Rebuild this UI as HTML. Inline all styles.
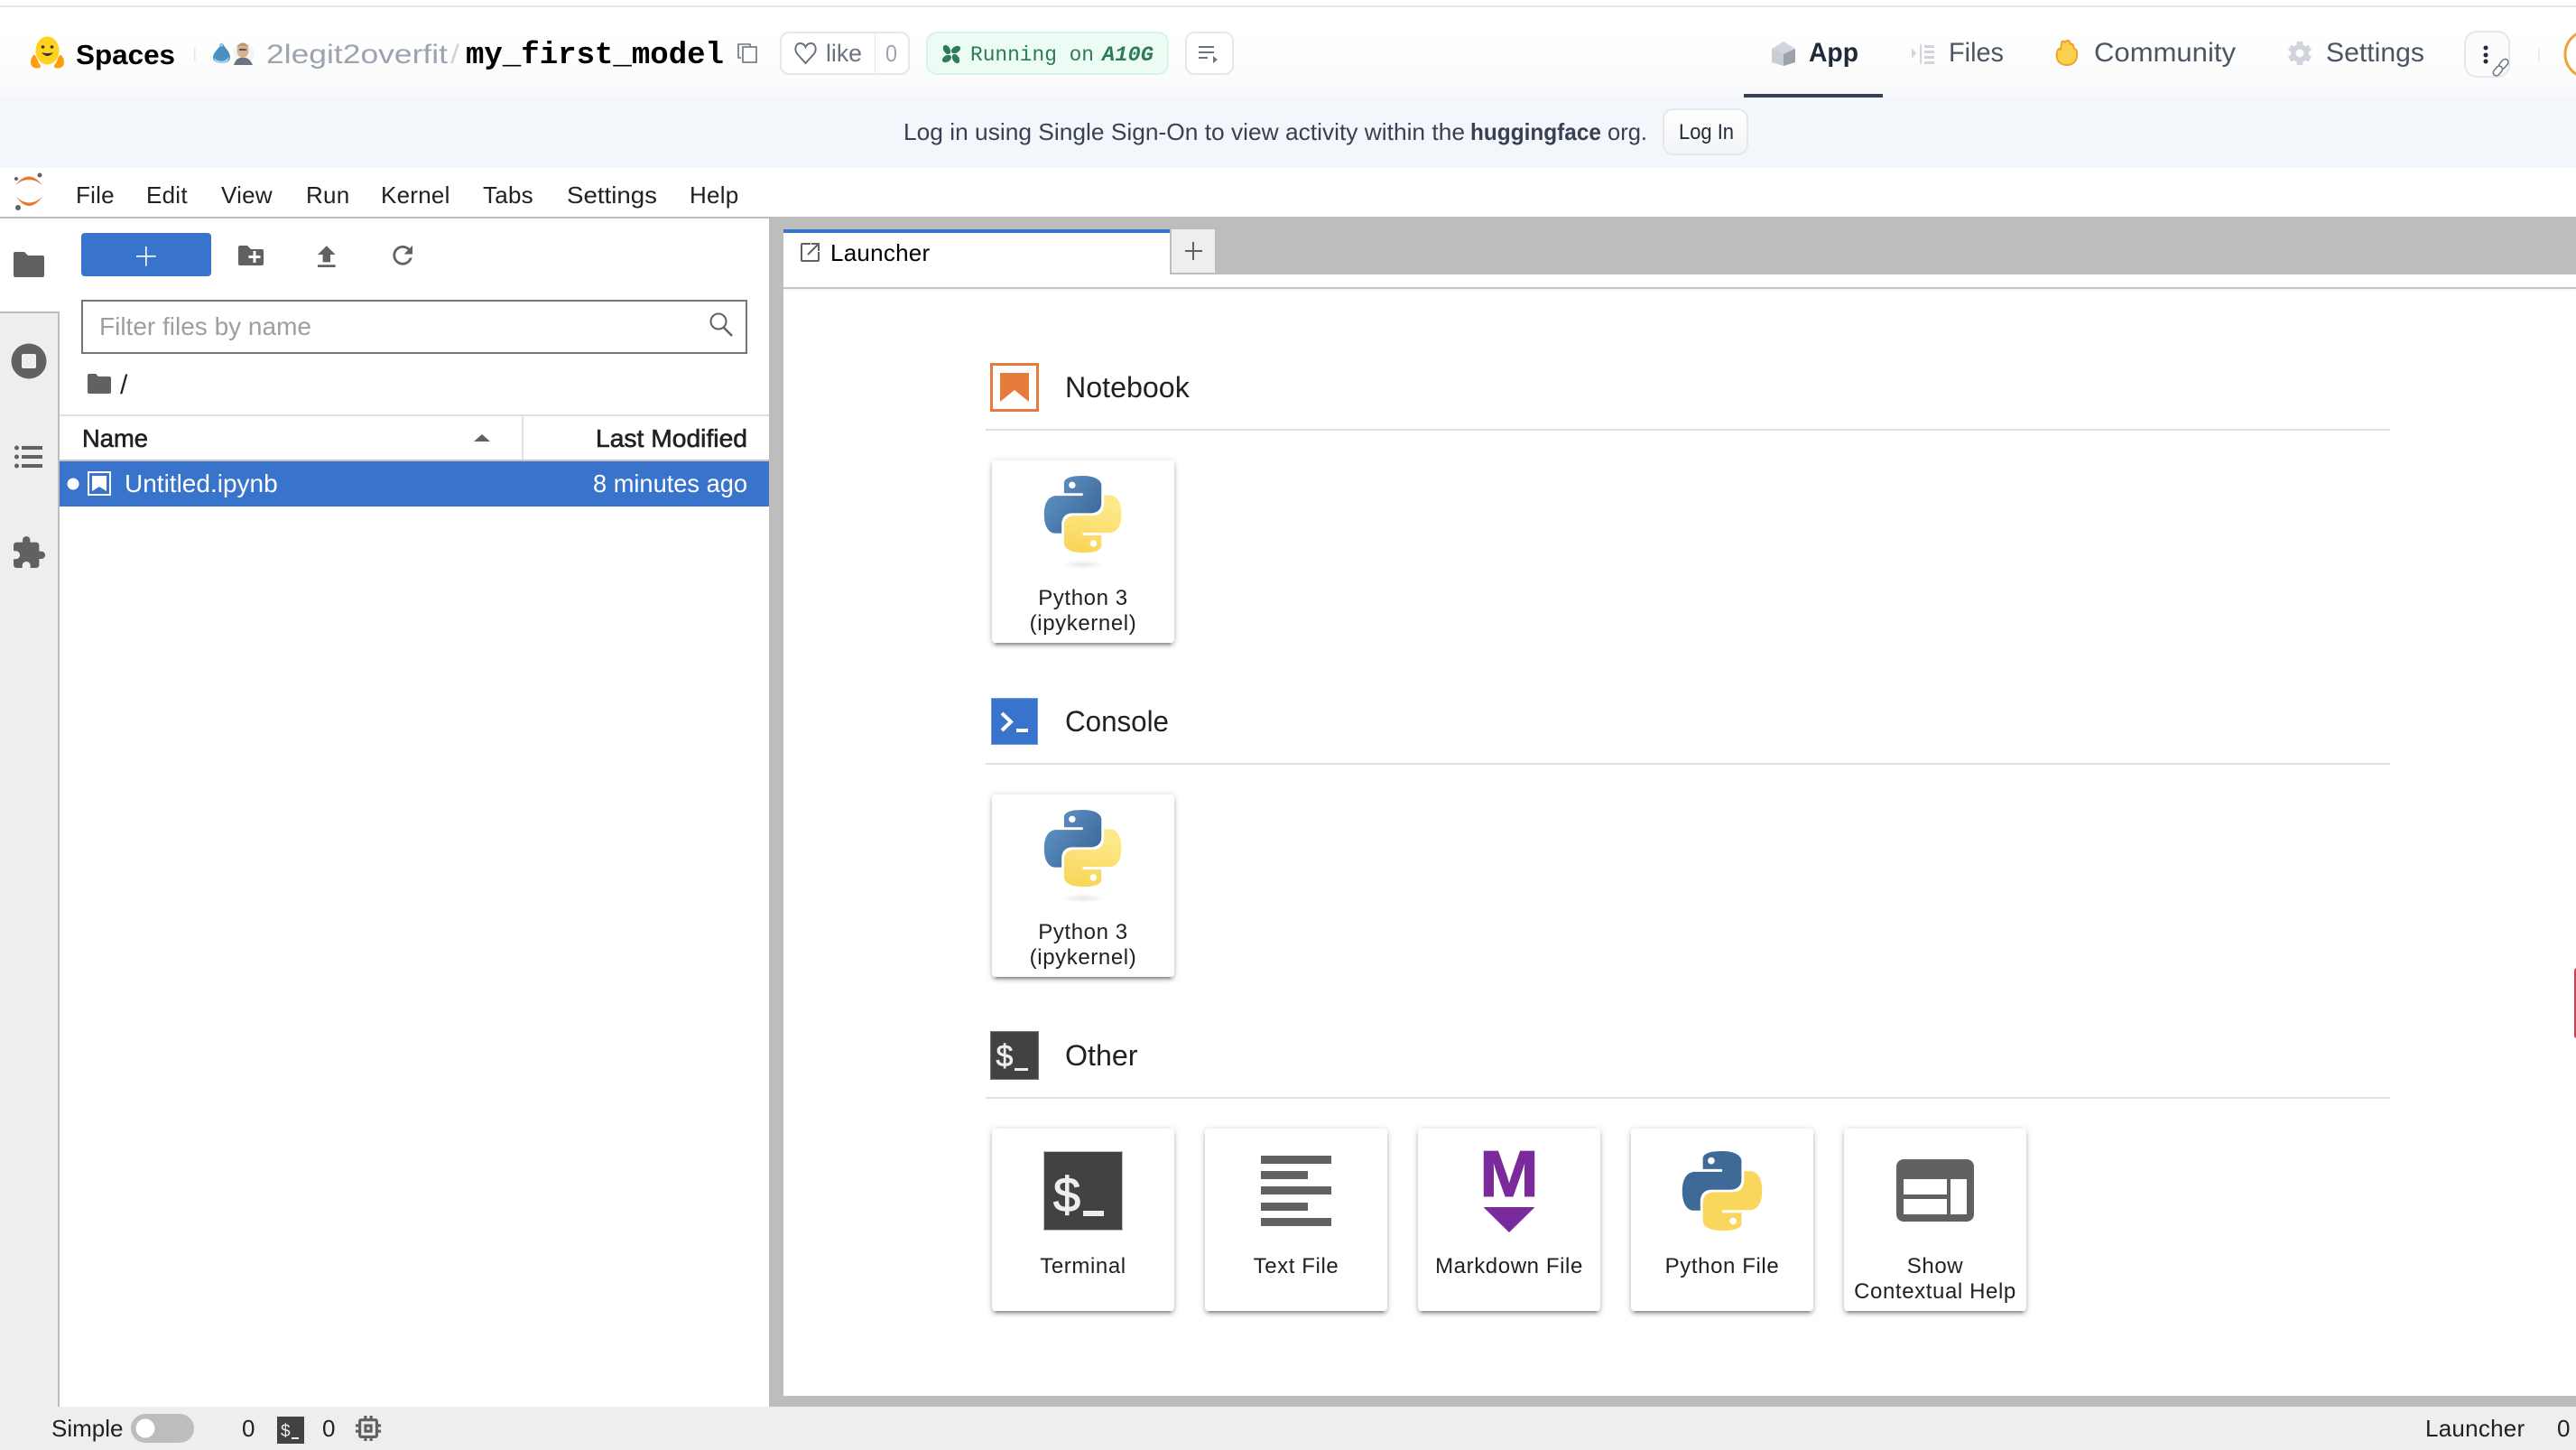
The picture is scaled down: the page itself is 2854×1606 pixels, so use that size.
<!DOCTYPE html>
<html lang="en"><head><meta charset="utf-8"><title>my_first_model - JupyterLab</title>
<style>
html,body{margin:0;padding:0;width:2854px;height:1606px;overflow:hidden;background:#fff}
.b{position:absolute}
.card{position:absolute;width:202px;height:202px;background:#fff;border-radius:4px;box-shadow:0 6px 2px -4px rgba(0,0,0,.24),0 4px 4px rgba(0,0,0,.16),0 1px 8px rgba(0,0,0,.18)}
svg#o{position:absolute;left:0;top:0}
text{font-family:"Liberation Sans",Arial,sans-serif;fill:#212121;white-space:pre}
.m{font-family:"Liberation Mono",monospace}
.n{font-size:26px}
.mn{font-size:26px;letter-spacing:.25px}
.f{font-size:28px}
.h{font-size:32.2px}
.l{font-size:24px;letter-spacing:.6px;text-anchor:middle}
.hf{font-size:30px;fill:#4b5563}
.bn{font-size:26px;fill:#374151}
</style></head><body>
<!-- HF header -->
<div class="b" style="left:0;top:6px;width:2854px;height:2px;background:#e5e5e5"></div>
<div class="b" style="left:0;top:8px;width:2854px;height:98px;background:linear-gradient(#fff 30%,#f9fafb)"></div>
<div class="b" style="left:0;top:106px;width:2854px;height:80px;background:#f3f6fa"></div>
<div class="b" style="left:1932px;top:104px;width:154px;height:4px;background:#374151"></div>
<div class="b" style="left:864px;top:35px;width:140px;height:44px;border:2px solid #e5e7eb;border-radius:10px;background:#fff"></div>
<div class="b" style="left:969px;top:36px;width:1px;height:46px;background:#e5e7eb"></div>
<div class="b" style="left:1026px;top:35px;width:265px;height:44px;border:2px solid #d6f5e6;border-radius:12px;background:#ecfbf3"></div>
<div class="b" style="left:1313px;top:35px;width:50px;height:44px;border:2px solid #e5e7eb;border-radius:10px;background:#fff"></div>
<div class="b" style="left:1842px;top:120px;width:91px;height:48px;border:2px solid #e5e7eb;border-radius:12px;background:linear-gradient(#fff,#f3f4f6)"></div>
<div class="b" style="left:2730px;top:34px;width:47px;height:48px;border:2px solid #e5e7eb;border-radius:14px;background:#fcfcfd"></div>
<!-- Jupyter chrome -->
<div class="b" style="left:0;top:240px;width:2854px;height:2px;background:#bdbdbd"></div>
<div class="b" style="left:0;top:345px;width:66px;height:1213px;background:#eee;box-sizing:border-box;border-top:2px solid #bdbdbd;border-right:2px solid #bdbdbd"></div>
<div class="b" style="left:852px;top:241px;width:2002px;height:63px;background:#bdbdbd"></div>
<div class="b" style="left:852px;top:241px;width:16px;height:1317px;background:#bdbdbd"></div>
<div class="b" style="left:868px;top:254px;width:428px;height:64px;background:#fff"></div>
<div class="b" style="left:868px;top:254px;width:428px;height:4px;background:#3874cb"></div>
<div class="b" style="left:1296px;top:254px;width:50px;height:50px;box-sizing:border-box;background:#eee;border-left:2px solid #bdbdbd;border-bottom:2px solid #bdbdbd"></div>
<div class="b" style="left:868px;top:318px;width:1986px;height:2px;background:#c4c4c4;box-shadow:0 1px 3px rgba(0,0,0,.08)"></div>
<div class="b" style="left:868px;top:1546px;width:1986px;height:12px;background:#bdbdbd"></div>
<div class="b" style="left:0;top:1558px;width:2854px;height:48px;background:#eee"></div>
<div class="b" style="left:2852px;top:1072px;width:6px;height:78px;background:#c8434f;border-radius:6px"></div>
<!-- File browser -->
<div class="b" style="left:90px;top:258px;width:144px;height:48px;background:#3874cb;border-radius:4px"></div>
<div class="b" style="left:90px;top:332px;width:738px;height:60px;box-sizing:border-box;border:2px solid #757575;background:#fff"></div>
<div class="b" style="left:66px;top:459px;width:786px;height:2px;background:#e0e0e0"></div>
<div class="b" style="left:578px;top:460px;width:2px;height:50px;background:#e0e0e0"></div>
<div class="b" style="left:66px;top:509px;width:786px;height:2px;background:#c4c4c4"></div>
<div class="b" style="left:66px;top:511px;width:786px;height:50px;background:#3874cb"></div>
<!-- Launcher cards and separators -->
<div class="b" style="left:1092px;top:475px;width:1556px;height:2px;background:#e0e0e0"></div>
<div class="b" style="left:1092px;top:845px;width:1556px;height:2px;background:#e0e0e0"></div>
<div class="b" style="left:1092px;top:1215px;width:1556px;height:2px;background:#e0e0e0"></div>
<div class="card" style="left:1099px;top:510px"></div>
<div class="card" style="left:1099px;top:880px"></div>
<div class="card" style="left:1099px;top:1250px"></div>
<div class="card" style="left:1335px;top:1250px"></div>
<div class="card" style="left:1571px;top:1250px"></div>
<div class="card" style="left:1807px;top:1250px"></div>
<div class="card" style="left:2043px;top:1250px"></div>

<svg id="o" width="2854" height="1606" viewBox="0 0 2854 1606" xmlns="http://www.w3.org/2000/svg">
<defs>
<linearGradient id="gb" gradientUnits="userSpaceOnUse" x1="2" y1="3" x2="17" y2="15"><stop offset="0" stop-color="#5d91c2"/><stop offset="1" stop-color="#3a6696"/></linearGradient>
<linearGradient id="gy" gradientUnits="userSpaceOnUse" x1="14" y1="8" x2="11" y2="23"><stop offset="0" stop-color="#fde98a"/><stop offset="1" stop-color="#f9d65c"/></linearGradient>
<radialGradient id="gs"><stop offset="0" stop-color="#000" stop-opacity=".1"/><stop offset="1" stop-color="#000" stop-opacity="0"/></radialGradient>
<path id="pb" fill-rule="evenodd" d="M14.25.18l.9.2.73.26.59.3.45.32.34.34.25.34.16.33.1.3.04.26.02.2-.01.13V8.5l-.05.63-.13.55-.21.46-.26.38-.3.31-.33.25-.35.19-.35.14-.33.1-.3.07-.26.04-.21.02H8.77l-.69.05-.59.14-.5.22-.41.27-.33.32-.27.35-.2.36-.15.37-.1.35-.07.32-.04.27-.02.21v3.06H3.17l-.21-.03-.28-.07-.32-.12-.35-.18-.36-.26-.36-.36-.35-.46-.32-.59-.28-.73-.21-.88-.14-1.05-.05-1.23.06-1.22.16-1.04.24-.87.32-.71.36-.57.4-.44.42-.33.42-.24.4-.16.36-.1.32-.05.24-.01h.16l.06.01h8.16v-.83H6.18l-.01-2.75-.02-.37.05-.34.11-.31.17-.28.25-.26.31-.23.38-.2.44-.18.51-.15.58-.12.64-.1.71-.06.77-.04.84-.02 1.27.05zm-6.3 1.98l-.23.33-.08.41.08.41.23.34.33.22.41.09.41-.09.33-.22.23-.34.08-.41-.08-.41-.23-.33-.33-.22-.41-.09-.41.09z"/>
<path id="py" fill-rule="evenodd" d="M21.04 6.11l.28.06.32.12.35.18.36.27.36.35.35.47.32.59.28.73.21.88.14 1.04.05 1.23-.06 1.23-.16 1.04-.24.86-.32.71-.36.57-.4.45-.42.33-.42.24-.4.16-.36.09-.32.05-.24.02-.16-.01h-8.22v.82h5.84l.01 2.76.02.36-.05.34-.11.31-.17.29-.25.25-.31.24-.38.2-.44.17-.51.15-.58.13-.64.09-.71.07-.77.04-.84.01-1.27-.04-1.07-.14-.9-.2-.73-.25-.59-.3-.45-.33-.34-.34-.25-.34-.16-.33-.1-.3-.04-.25-.02-.2.01-.13v-5.34l.05-.64.13-.54.21-.46.26-.38.3-.32.33-.24.35-.2.35-.14.33-.1.3-.06.26-.04.21-.02.13-.01h5.84l.69-.05.59-.14.5-.21.41-.28.33-.32.27-.35.2-.36.15-.36.1-.35.07-.32.04-.28.02-.21V6.07h2.09l.14.01zm-6.47 14.25l-.23.33-.08.41.08.41.23.33.33.23.41.08.41-.08.33-.23.23-.33.08-.41-.08-.41-.23-.33-.33-.23-.41-.08-.41.08z"/>
</defs>

<!-- HF logo -->
<g>
<ellipse cx="52.5" cy="56" rx="13" ry="15.5" fill="#ffd21e"/>
<path d="M37 61c-3 4-4 8-2 12 3 3 7 3 9 2 2-1 1-3-1-5l-2-5c-1-3-3-5-4-4z" fill="#ff9d0b"/>
<path d="M68 61c3 4 4 8 2 12-3 3-7 3-9 2-2-1-1-3 1-5l2-5c1-3 3-5 4-4z" fill="#ff9d0b"/>
<circle cx="47.500" cy="52" r="1.800" fill="#32343d"/><circle cx="57.500" cy="52" r="1.800" fill="#32343d"/>
<path d="M47.500 59q5 5 10 0q-5 1-10 0z" fill="#32343d" stroke="#32343d" stroke-width="1"/>
</g>
<text x="84" y="71" font-size="31" font-weight="700" style="fill:#000" textLength="110" lengthAdjust="spacingAndGlyphs">Spaces</text>
<rect x="215" y="52" width="1.500" height="16" fill="#e5e7eb"/>
<!-- avatars -->
<path d="M246 47c-1 5-10 10-10 17 0 4 5 6 10 6s9-2 9-7c0-6-7-11-9-16z" fill="#4a90c0"/>
<path d="M237 64q9 8 17-1q-1 7-8 7-8 0-9-6z" fill="#a9d4ee"/>
<circle cx="245" cy="50" r="2" fill="#8ec6e6"/>
<circle cx="270" cy="59" r="12" fill="#f3f4f6"/>
<ellipse cx="269" cy="56" rx="6.500" ry="8" fill="#d8b08c"/>
<path d="M262 52q7-9 14 0q-7-3-14 0z" fill="#b89a66"/>
<path d="M259 72q3-9 10-8q7-1 11 8z" fill="#6b7280"/>
<rect x="265" y="54" width="8" height="2" fill="#555"/>
<text x="295" y="70" class="hf" style="fill:#9ca3af" textLength="201" lengthAdjust="spacingAndGlyphs">2legit2overfit</text>
<text x="499" y="70" class="hf" style="fill:#d1d5db" textLength="10" lengthAdjust="spacingAndGlyphs">/</text>
<text x="516" y="70" class="m" font-size="34" font-weight="700" style="fill:#000" textLength="286" lengthAdjust="spacingAndGlyphs">my_first_model</text>
<g fill="none" stroke="#6b7280" stroke-width="1.600"><rect x="823" y="52" width="15" height="17"/><path d="M821 64h-3V49h13v3"/></g>
<!-- like -->
<path d="M892.500 70l-9-10c-4-5-2-12 3-12 3 0 5 2 6 4 1-2 3-4 6-4 5 0 7 7 3 12z" fill="none" stroke="#6b7280" stroke-width="2"/>
<text x="915" y="68" class="hf" font-size="27" style="fill:#6b7280;font-size:27px" textLength="40" lengthAdjust="spacingAndGlyphs">like</text>
<text x="981" y="68" class="hf" style="fill:#9ca3af;font-size:26px" textLength="13" lengthAdjust="spacingAndGlyphs">0</text>
<!-- running -->
<g fill="#2f7a5a" transform="translate(1054 60)">
<ellipse cx="-5" cy="-5" rx="5.500" ry="3.600" transform="rotate(60 -5 -5)"/>
<ellipse cx="5" cy="-5" rx="5.500" ry="3.600" transform="rotate(-30 5 -5)"/>
<ellipse cx="5" cy="5" rx="5.500" ry="3.600" transform="rotate(60 5 5)"/>
<ellipse cx="-5" cy="5" rx="5.500" ry="3.600" transform="rotate(-30 -5 5)"/>
</g>
<text x="1075" y="67" class="m" font-size="23" style="fill:#2f7a5a" textLength="137" lengthAdjust="spacingAndGlyphs">Running on</text>
<text x="1221" y="67" class="m" font-size="23" font-weight="700" font-style="italic" style="fill:#2f7a5a" textLength="57" lengthAdjust="spacingAndGlyphs">A10G</text>
<!-- small list btn -->
<g fill="#6b7280"><rect x="1328" y="51" width="17" height="2"/><rect x="1328" y="57" width="17" height="2"/><rect x="1328" y="63" width="10" height="2"/><path d="M1344 62l5 4-5 4z"/></g>
<!-- right tabs -->
<path d="M1976 46l13 8v15l-13 4-13-4V54z" fill="#d1d5db"/><path d="M1976 60l13-6v15l-13 4z" fill="#9ca3af"/><path d="M1976 60l-13-6v15l13 4z" fill="#c9cdd4"/>
<text x="2004" y="68" class="hf" font-weight="700" style="fill:#1f2937" textLength="55" lengthAdjust="spacingAndGlyphs">App</text>
<g fill="#d1d5db"><path d="M2118 53l5 6-5 6z"/><rect x="2127" y="49" width="2" height="22"/><rect x="2132" y="50" width="11" height="3"/><rect x="2132" y="56" width="11" height="3"/><rect x="2132" y="62" width="11" height="3"/><rect x="2132" y="68" width="11" height="3"/></g>
<text x="2159" y="68" class="hf" textLength="61" lengthAdjust="spacingAndGlyphs">Files</text>
<path d="M2279 64c-1-4 0-8 2-10l2 1 1-7c0-3 3-3 4-1l1-1c1-2 4-1 4 1l1 2c1-1 3 0 3 2l1 3c2 0 3 2 3 4 1 8-3 14-11 14-6 0-10-3-11-8z" fill="#fbd24e" stroke="#f1a22c" stroke-width="2"/>
<text x="2320" y="68" class="hf" textLength="157" lengthAdjust="spacingAndGlyphs">Community</text>
<g fill="#d1d5db"><circle cx="2548" cy="59" r="10"/><rect x="2544.500" y="46" width="7" height="26" rx="1"/><rect x="2544.500" y="46" width="7" height="26" rx="1" transform="rotate(60 2548 59)"/><rect x="2544.500" y="46" width="7" height="26" rx="1" transform="rotate(120 2548 59)"/></g><circle cx="2548" cy="59" r="4.500" fill="#fdfdfe"/>
<text x="2577" y="68" class="hf" textLength="109" lengthAdjust="spacingAndGlyphs">Settings</text>
<g fill="#1f2937"><circle cx="2754" cy="53" r="2.500"/><circle cx="2754" cy="61" r="2.500"/><circle cx="2754" cy="68" r="2.500"/></g>
<g transform="rotate(40 2771 75)" fill="#fff" stroke="#6b7280" stroke-width="1.500"><rect x="2767" y="64" width="7" height="12" rx="3.500"/><rect x="2767" y="74" width="7" height="12" rx="3.500"/></g>
<rect x="2812" y="53" width="1.500" height="16" fill="#e5e7eb"/>
<circle cx="2868" cy="60" r="26" fill="#fff" stroke="#eca33a" stroke-width="3"/>
<!-- banner -->
<text x="1001" y="155" class="bn" textLength="622" lengthAdjust="spacingAndGlyphs">Log in using Single Sign-On to view activity within the</text>
<text x="1629" y="155" class="bn" font-weight="700" textLength="145" lengthAdjust="spacingAndGlyphs">huggingface</text>
<text x="1781" y="155" class="bn" textLength="44" lengthAdjust="spacingAndGlyphs">org.</text>
<text x="1860" y="154" style="font-size:24px;fill:#1f2937" textLength="61" lengthAdjust="spacingAndGlyphs">Log In</text>

<!-- Jupyter logo & menu -->
<path d="M17 205Q32 186 47 205Q32 193 17 205z M18 218Q32 238 47 218Q32 231 18 218z" fill="#e67a33"/>
<circle cx="18" cy="198" r="2" fill="#616161"/><circle cx="44" cy="194" r="2.500" fill="#616161"/><circle cx="20" cy="230" r="3" fill="#616161"/>
<text x="84" y="225" class="mn">File</text>
<text x="162" y="225" class="mn">Edit</text>
<text x="245" y="225" class="mn">View</text>
<text x="339" y="225" class="mn">Run</text>
<text x="422" y="225" class="mn">Kernel</text>
<text x="535" y="225" class="mn">Tabs</text>
<text x="628" y="225" class="n" textLength="100" lengthAdjust="spacingAndGlyphs">Settings</text>
<text x="764" y="225" class="mn">Help</text>

<!-- side bar icons -->
<path d="M17 279h10l4 4h16a2 2 0 0 1 2 2v20a2 2 0 0 1-2 2H17a2 2 0 0 1-2-2V281a2 2 0 0 1 2-2z" fill="#616161"/>
<circle cx="32" cy="400" r="19.500" fill="#616161"/><rect x="24" y="392" width="16" height="16" rx="2" fill="#eee"/>
<g fill="#616161"><circle cx="18.500" cy="496" r="2.500"/><circle cx="18.500" cy="506" r="2.500"/><circle cx="18.500" cy="516" r="2.500"/><rect x="24" y="494" width="23" height="4"/><rect x="24" y="504" width="23" height="4"/><rect x="24" y="514" width="23" height="4"/></g>
<path transform="translate(11.700 592.300) scale(1.667)" fill="#616161" d="M20.500 11H19V7c0-1.100-.9-2-2-2h-4V3.500C13 2.120 11.880 1 10.500 1S8 2.120 8 3.500V5H4c-1.100 0-1.990.9-1.990 2v3.800H3.500c1.490 0 2.700 1.210 2.700 2.700s-1.210 2.700-2.700 2.700H2V20c0 1.100.9 2 2 2h3.800v-1.500c0-1.490 1.210-2.700 2.700-2.700 1.490 0 2.700 1.210 2.700 2.700V22H17c1.100 0 2-.9 2-2v-4h1.500c1.380 0 2.500-1.120 2.500-2.500S21.880 11 20.500 11z"/>

<!-- toolbar -->
<path d="M161 273h1.600v10h10v1.600h-10v10h-1.600v-10h-10v-1.600h10z" fill="#fff"/>
<path d="M266 272h8l4 4h12a2 2 0 0 1 2 2v14a2 2 0 0 1-2 2h-24a2 2 0 0 1-2-2v-18a2 2 0 0 1 2-2z" fill="#616161"/>
<path d="M280.500 278h3v5h5v3h-5v5h-3v-5h-5v-3h5z" fill="#fff"/>
<path transform="translate(345 268) scale(1.400)" fill="#616161" d="M9 16h6v-6h4l-7-7-7 7h4zm-4 2h14v2H5z"/>
<path transform="translate(430 266.600) scale(1.350)" fill="#616161" d="M17.650 6.350C16.200 4.900 14.210 4 12 4c-4.420 0-7.990 3.580-7.990 8s3.570 8 7.990 8c3.730 0 6.840-2.550 7.730-6h-2.080c-.82 2.330-3.040 4-5.650 4-3.310 0-6-2.690-6-6s2.690-6 6-6c1.660 0 3.140.69 4.220 1.780L13 11h7V4l-2.350 2.350z"/>
<!-- filter -->
<text x="110" y="371" class="f" style="fill:#9e9e9e">Filter files by name</text>
<circle cx="796" cy="356" r="8.500" fill="none" stroke="#616161" stroke-width="2"/><path d="M802 363l9 9" stroke="#616161" stroke-width="2.500"/>
<!-- breadcrumb -->
<path d="M99 414h7l3 3h12a2 2 0 0 1 2 2v15a2 2 0 0 1-2 2H99a2 2 0 0 1-2-2V416a2 2 0 0 1 2-2z" fill="#616161"/>
<text x="133" y="436" style="font-size:30px">/</text>
<!-- listing -->
<text x="91" y="495" class="f" style="stroke:#212121;stroke-width:.6px" textLength="73" lengthAdjust="spacingAndGlyphs">Name</text>
<path d="M534 481l9 8h-18z" fill="#616161"/>
<text x="660" y="495" class="f" style="stroke:#212121;stroke-width:.6px" textLength="168" lengthAdjust="spacingAndGlyphs">Last Modified</text>
<circle cx="81" cy="536" r="6.500" fill="#fff"/>
<rect x="98" y="523" width="24" height="25" fill="none" stroke="#fff" stroke-width="2"/>
<path d="M102 527h16v17l-8-5-8 5z" fill="#fff"/>
<text x="138" y="545" class="f" style="fill:#fff">Untitled.ipynb</text>
<text x="657" y="545" class="f" style="fill:#fff" textLength="171" lengthAdjust="spacingAndGlyphs">8 minutes ago</text>

<!-- tab -->
<g fill="none" stroke="#616161" stroke-width="2"><path d="M898 270h-9a1 1 0 0 0-1 1v17a1 1 0 0 0 1 1h17a1 1 0 0 0 1-1v-9"/><path d="M895 282l11-11M899 270h8v8"/></g>
<text x="920" y="289" class="n" style="fill:#000;letter-spacing:.25px">Launcher</text>
<path d="M1313 277h8v-9h2v9h9v2h-9v9h-2v-9h-8z" fill="#616161"/>

<!-- Notebook -->
<rect x="1098.500" y="403.500" width="51" height="51" fill="#fff" stroke="#e67c3b" stroke-width="3"/>
<path d="M1108 413h32v32l-16-13-16 13z" fill="#e67c3b"/>
<text x="1180" y="440" class="h">Notebook</text>
<g transform="translate(1157 527) scale(3.550)"><use href="#pb" fill="url(#gb)"/><use href="#py" fill="url(#gy)"/></g>
<ellipse cx="1200" cy="625" rx="24" ry="5" fill="url(#gs)"/>
<text x="1200" y="670" class="l">Python 3</text>
<text x="1200" y="698" class="l">(ipykernel)</text>

<!-- Console -->
<rect x="1098.500" y="773.500" width="51" height="51" fill="#3874cb" stroke="#6d9ade" stroke-width="1"/>
<path d="M1110 790l10 9.500-10 9.500" fill="none" stroke="#fff" stroke-width="4"/>
<rect x="1126" y="807" width="13" height="4" fill="#fff"/>
<text x="1180" y="810" class="h" textLength="115" lengthAdjust="spacingAndGlyphs">Console</text>
<g transform="translate(1157 897) scale(3.550)"><use href="#pb" fill="url(#gb)"/><use href="#py" fill="url(#gy)"/></g>
<ellipse cx="1200" cy="995" rx="24" ry="5" fill="url(#gs)"/>
<text x="1200" y="1040" class="l">Python 3</text>
<text x="1200" y="1068" class="l">(ipykernel)</text>

<!-- Other -->
<rect x="1097.500" y="1142.500" width="53" height="53" fill="#424242" stroke="#757575" stroke-width="1"/>
<text x="1103.500" y="1181" style="font-size:34px;fill:#eee;stroke:#eee;stroke-width:.6px">$</text>
<rect x="1124" y="1183" width="15" height="3" fill="#eee"/>
<text x="1180" y="1180" class="h">Other</text>

<rect x="1156.500" y="1275.500" width="87" height="87" fill="#424242" stroke="#bdbdbd" stroke-width="1"/>
<text x="1167" y="1342" style="font-size:54px;fill:#eee;stroke:#eee;stroke-width:1.200px">$</text>
<rect x="1200" y="1341" width="23" height="6" fill="#eee"/>
<text x="1200" y="1410" class="l">Terminal</text>

<g fill="#616161"><rect x="1397" y="1280" width="78" height="9"/><rect x="1397" y="1297" width="52" height="9"/><rect x="1397" y="1314" width="78" height="9"/><rect x="1397" y="1332" width="52" height="9"/><rect x="1397" y="1349" width="78" height="9"/></g>
<text x="1436" y="1410" class="l">Text File</text>

<text x="1639" y="1325" font-size="72" font-weight="700" style="fill:#7b2a9c;stroke:#7b2a9c;stroke-width:1px" textLength="66" lengthAdjust="spacingAndGlyphs">M</text>
<path d="M1643.500 1337h57l-28.500 28z" fill="#7b2a9c"/>
<text x="1672" y="1410" class="l">Markdown File</text>

<g transform="translate(1864 1275) scale(3.670)"><use href="#pb" fill="#3f6a97"/><use href="#py" fill="#f9d65c"/></g>
<text x="1908" y="1410" class="l">Python File</text>

<rect x="2101" y="1284" width="86" height="69" rx="8" fill="#616161"/>
<g fill="#fff"><rect x="2109" y="1306" width="48" height="17"/><rect x="2109" y="1328" width="48" height="17"/><rect x="2161" y="1306" width="18" height="39"/></g>
<text x="2144" y="1410" class="l">Show</text>
<text x="2144" y="1438" class="l">Contextual Help</text>

<!-- status bar -->
<text x="57" y="1591" class="n">Simple</text>
<rect x="145" y="1566" width="70" height="32" rx="16" fill="#bdbdbd"/><circle cx="161" cy="1582" r="10.500" fill="#fff"/>
<text x="268" y="1591" class="n">0</text>
<rect x="307" y="1569" width="30" height="30" fill="#424242"/>
<text x="311" y="1591" style="font-size:19px;fill:#eee">$</text><rect x="323" y="1592" width="8" height="2" fill="#eee"/>
<text x="357" y="1591" class="n">0</text>
<path transform="translate(389.300 1563.300) scale(1.560)" fill="#616161" d="M15 9H9v6h6V9zm-2 4h-2v-2h2v2zm8-2V9h-2V7c0-1.100-.9-2-2-2h-2V3h-2v2h-2V3H9v2H7c-1.100 0-2 .9-2 2v2H3v2h2v2H3v2h2v2c0 1.100.9 2 2 2h2v2h2v-2h2v2h2v-2h2c1.100 0 2-.9 2-2v-2h2v-2h-2v-2h2zm-4 6H7V7h10v10z"/>
<text x="2687" y="1591" class="n" style="letter-spacing:.25px">Launcher</text>
<text x="2833" y="1591" class="n">0</text>
</svg>
</body></html>
